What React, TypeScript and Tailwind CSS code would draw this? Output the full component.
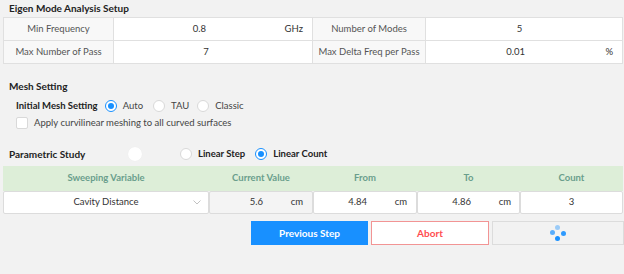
import React from "react";

function Radio({ checked }: { checked?: boolean }) {
  return checked ? (
    <span className="flex h-[12px] w-[12px] shrink-0 items-center justify-center rounded-full border border-[#1890ff] bg-white">
      <span className="block h-[6px] w-[6px] rounded-full bg-[#1890ff]" />
    </span>
  ) : (
    <span className="block h-[12px] w-[12px] shrink-0 rounded-full border border-[#d9d9d9] bg-white" />
  );
}

function LabelCell({ text }: { text: string }) {
  return (
    <div className="flex items-center justify-center bg-[#f8f8f8] text-[#555]">{text}</div>
  );
}

function ValueCell({ value, unit }: { value: string; unit?: string }) {
  return (
    <div className="flex items-center bg-white text-[#333]">
      <span className="flex-1 text-center">{value}</span>
      <span className="pr-[9px]">{unit ?? ""}</span>
    </div>
  );
}

export default function App() {
  return (
    <div
      className="relative h-[274px] w-[624px] overflow-hidden bg-[#f2f2f2] text-[9.5px] text-[#333]"
      style={{ fontFamily: "Lato, 'Noto Sans', sans-serif" }}
    >
      <div className="pl-[9px] pt-[1px] text-[10px] font-bold leading-[15px] text-[#222]">
        Eigen Mode Analysis Setup
      </div>
      <div className="ml-[3px] mt-[1px] grid w-[620px] grid-cols-[109px_198px_112px_196px] grid-rows-[22px_22px] gap-[1px] bg-[#e0e0e0] p-[1px]">
        <LabelCell text="Min Frequency" />
        <ValueCell value="0.8" unit="GHz" />
        <LabelCell text="Number of Modes" />
        <ValueCell value="5" />
        <LabelCell text="Max Number of Pass" />
        <ValueCell value="7" unit={"\u00a0\u00a0"} />
        <LabelCell text="Max Delta Freq per Pass" />
        <ValueCell value="0.01" unit="%" />
      </div>

      <div className="mt-[15px] pl-[9px] text-[10px] font-bold leading-[14px] text-[#222]">
        Mesh Setting
      </div>
      <div className="mt-[6px] flex h-[14px] items-center pl-[16px]">
        <span className="mr-[7px] font-bold text-[#222]">Initial Mesh Setting</span>
        <Radio checked />
        <span className="ml-[6px] mr-[10px] text-[#444]">Auto</span>
        <Radio />
        <span className="ml-[6px] mr-[8px] text-[#444]">TAU</span>
        <Radio />
        <span className="ml-[6px] text-[#444]">Classic</span>
      </div>
      <div className="mt-[4px] flex h-[12px] items-center pl-[16px]">
        <span className="block h-[12px] w-[12px] rounded-[2px] border border-[#d9d9d9] bg-white" />
        <span className="ml-[6px] text-[#444]">Apply curvilinear meshing to all curved surfaces</span>
      </div>

      <div className="mt-[18px] flex h-[14px] items-center pl-[9px]">
        <span className="w-[119px] text-[10px] font-bold text-[#222]">Parametric Study</span>
        <span className="block h-[14px] w-[14px] rounded-full bg-white shadow-[0_0_1px_rgba(0,0,0,0.06)]" />
        <span className="ml-[38px] flex">
          <Radio />
        </span>
        <span className="ml-[6px] mr-[10px] font-bold text-[#222]">Linear Step</span>
        <Radio checked />
        <span className="ml-[6px] font-bold text-[#222]">Linear Count</span>
      </div>

      <div className="ml-[3px] mt-[5px] w-[620px]">
        <div className="grid h-[25px] grid-cols-[206px_104px_104px_103px_103px] items-center bg-[#ddeed8] font-bold text-[#6a9e8c]">
          <span className="text-center">Sweeping Variable</span>
          <span className="text-center">Current Value</span>
          <span className="text-center">From</span>
          <span className="text-center">To</span>
          <span className="text-center">Count</span>
        </div>
        <div className="grid h-[23px] grid-cols-[206px_104px_104px_103px_103px] text-[#333]">
          <div className="relative flex items-center justify-center rounded-[2px] border border-[#dcdcdc] bg-white">
            <span>Cavity Distance</span>
            <svg className="absolute right-[7px] top-[8px]" width="8" height="5" viewBox="0 0 8 5">
              <path d="M0.5 0.5 L4 4 L7.5 0.5" fill="none" stroke="#bbb" strokeWidth="0.9" />
            </svg>
          </div>
          <div className="flex items-center rounded-[2px] border border-[#dcdcdc] bg-[#f4f4f4]">
            <span className="w-[58px] pr-[5px] text-right">5.6</span>
            <span className="ml-auto pr-[9px]">cm</span>
          </div>
          <div className="flex items-center rounded-[2px] border border-[#dcdcdc] bg-white">
            <span className="w-[54px] pr-[1px] text-right">4.84</span>
            <span className="ml-auto pr-[9px]">cm</span>
          </div>
          <div className="flex items-center rounded-[2px] border border-[#dcdcdc] bg-white">
            <span className="w-[54px] pr-[1px] text-right">4.86</span>
            <span className="ml-auto pr-[8px]">cm</span>
          </div>
          <div className="flex items-center justify-center rounded-[2px] border border-[#dcdcdc] bg-white">
            <span>3</span>
          </div>
        </div>
      </div>

      <div className="mt-[7px] flex h-[24px] justify-end">
        <button className="w-[117px] bg-[#1890ff] text-[10px] font-bold text-white">Previous Step</button>
        <button className="ml-[3px] w-[118px] border border-[#f29494] bg-white text-[10px] font-bold text-[#ff4d4f]">
          Abort
        </button>
        <button className="ml-[3px] flex w-[132px] items-center justify-center border border-[#dcdcdc] bg-[#f2f2f2]">
          <span className="relative block h-[14px] w-[14px]">
            <span className="absolute left-[4px] top-[-1px] h-[5px] w-[5px] rounded-full bg-[#1890ff] opacity-40" />
            <span className="absolute left-[-1px] top-[4px] h-[5px] w-[5px] rounded-full bg-[#1890ff] opacity-70" />
            <span className="absolute left-[10px] top-[5px] h-[5px] w-[5px] rounded-full bg-[#1890ff] opacity-90" />
            <span className="absolute left-[4px] top-[10px] h-[5px] w-[5px] rounded-full bg-[#1890ff]" />
          </span>
        </button>
      </div>
    </div>
  );
}
